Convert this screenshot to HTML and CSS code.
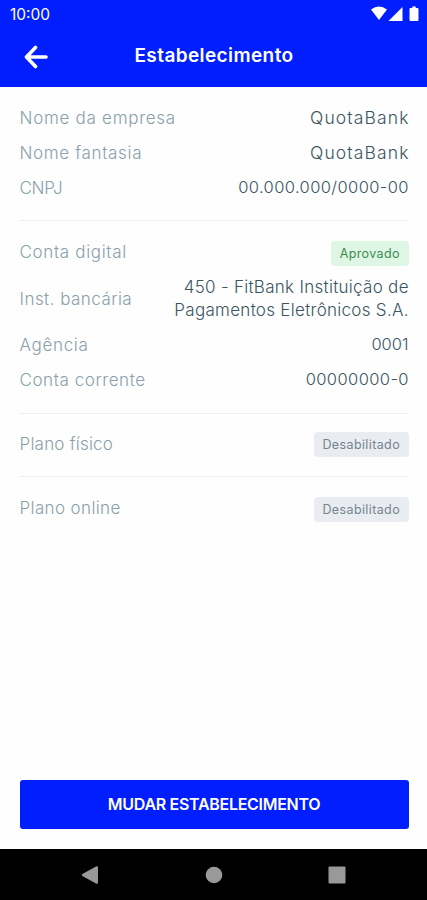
FILE: index.html
```html
<!DOCTYPE html>
<html lang="pt-BR">
<head>
<meta charset="utf-8">
<title>Estabelecimento</title>
<link rel="stylesheet" href="styles.css">
</head>
<body>
<header class="header">
  <div class="status">
    <span class="time">10:00</span>
    <svg class="status-icons" width="48" height="16" viewBox="0 0 48 16">
      <path d="M0 3.6Q8 -2.8 16 3.6L8 14Z"/>
      <path d="M31.5 1v14H17.5Z"/>
      <path d="M38.5 3q0-1 1-1h1.8V.6h3.4V2h1.8q1 0 1 1v11q0 1-1 1h-7q-1 0-1-1Z"/>
    </svg>
  </div>
  <div class="appbar">
    <svg class="back" width="24" height="24" viewBox="0 0 24 24"><path d="M22 12H3M11.5 2.5L2.5 12l9 9.5"/></svg>
    <h1 class="title">Estabelecimento</h1>
  </div>
</header>
<main class="content">
  <section class="group">
    <div class="row"><span class="label l-empresa">Nome da empresa</span><span class="value v-name">QuotaBank</span></div>
    <div class="row"><span class="label l-fantasia">Nome fantasia</span><span class="value v-name">QuotaBank</span></div>
    <div class="row"><span class="label l-cnpj">CNPJ</span><span class="value v-number">00.000.000/0000-00</span></div>
  </section>
  <section class="group">
    <div class="row"><span class="label l-digital">Conta digital</span><span class="badge approved">Aprovado</span></div>
    <div class="row tall"><span class="label l-inst">Inst. bancária</span><span class="value v-bank">450 - FitBank Instituição de<br>Pagamentos Eletrônicos S.A.</span></div>
    <div class="row"><span class="label l-agencia">Agência</span><span class="value">0001</span></div>
    <div class="row"><span class="label l-corrente">Conta corrente</span><span class="value v-number">00000000-0</span></div>
  </section>
  <section class="group">
    <div class="row"><span class="label l-fisico">Plano físico</span><span class="badge disabled">Desabilitado</span></div>
  </section>
  <section class="group">
    <div class="row"><span class="label l-online">Plano online</span><span class="badge disabled">Desabilitado</span></div>
  </section>
</main>
<footer class="actions"><button class="primary">MUDAR ESTABELECIMENTO</button></footer>
<nav class="navbar">
  <svg width="18" height="20" viewBox="0 0 18 20"><path d="M1.4 9Q.4 10 1.4 11L15 18.6Q17 19.4 17 17.4V2.6Q17 .6 15 1.4Z"/></svg>
  <svg width="18" height="18" viewBox="0 0 18 18"><circle cx="9" cy="9" r="8.3"/></svg>
  <svg width="18" height="18" viewBox="0 0 18 18"><rect x=".5" y=".5" width="17" height="17" rx="1"/></svg>
</nav>
</body>
</html>
```
FILE: styles.css
```css
* { box-sizing: border-box; }
body {
  margin: 0;
  height: 900px;
  display: flex;
  flex-direction: column;
  background: #fefefe;
  font-family: Inter, "Liberation Sans", sans-serif;
  overflow: hidden;
}
.header { height: 86.5px; background: #001eff; color: #fff; }
.status {
  height: 28px;
  display: flex;
  align-items: center;
  justify-content: space-between;
  padding: 0 8.5px 0 10px;
}
.time { font-size: 15.5px; font-weight: 400; }
.status-icons { fill: #fff; }
.appbar {
  height: 57px;
  display: grid;
  grid-template-columns: 24px 1fr 24px;
  align-items: center;
  padding: 0 23px 0 24px;
}
.back { fill: none; stroke: #fff; stroke-width: 3.6; stroke-linecap: round; stroke-linejoin: round; margin-top: 1px; }
.title { margin: -2px 0 0; text-align: center; font-size: 19px; font-weight: 600; letter-spacing: 0.4px; white-space: nowrap; }
.content { flex: 1; padding: 0 18.5px 0 19.5px; }
.group { padding: 13.5px 0 13.5px; border-bottom: 1.5px solid #eaeeef; }
.group:nth-child(1) { padding: 13px 0 15px; }
.group:nth-child(2) { padding: 14px 0 16px; }
.group:last-child { padding-top: 15px; border-bottom: 0; }
.row {
  height: 35px;
  display: flex;
  align-items: center;
  justify-content: space-between;
  font-size: 16.5px;
  line-height: 23px;
  font-weight: 300;
  white-space: nowrap;
}
.tall { height: 57px; }
.label { color: #8aa0aa; font-size: 17px; margin-top: 2px; }
.l-empresa { letter-spacing: 0.72px; }
.l-fantasia, .l-digital, .l-agencia { letter-spacing: 0.67px; }
.l-cnpj { letter-spacing: -0.3px; }
.l-digital { margin-top: 0; }
.l-inst { letter-spacing: 0.46px; }
.l-corrente { letter-spacing: 0.57px; }
.l-fisico { letter-spacing: 0.22px; margin-top: -1px; }
.l-online { letter-spacing: 0.37px; margin-top: -1px; }
.value { color: #3b5562; text-align: right; }
.v-name { font-size: 17.5px; letter-spacing: 1.13px; margin-right: -1.1px; }
.v-number { letter-spacing: 0.4px; margin-right: -0.4px; }
.v-bank { font-size: 17px; letter-spacing: 0.29px; margin: 2px -0.3px 0 0; }
.badge {
  height: 25px;
  display: flex;
  align-items: center;
  justify-content: center;
  border-radius: 4px;
  font-size: 12.5px;
  font-weight: 400;
  letter-spacing: 0.38px;
  margin-top: 2px;
}
.approved { width: 77.5px; background: #def6e4; color: #3d8b52; }
.disabled { width: 94.5px; background: #e9edf1; color: #758490; margin-top: 0; }
.actions { height: 69px; padding: 0 18.5px 0 19.5px; }
.primary {
  width: 100%;
  height: 48.5px;
  border: 0;
  border-radius: 3px;
  background: #001eff;
  color: #fff;
  font: 600 16px Inter, "Liberation Sans", sans-serif;
  letter-spacing: -0.3px;
}
.navbar {
  height: 51px;
  background: #000;
  display: flex;
  align-items: center;
  justify-content: space-between;
  padding: 0 81px;
}
.navbar svg { fill: #999; }
```
